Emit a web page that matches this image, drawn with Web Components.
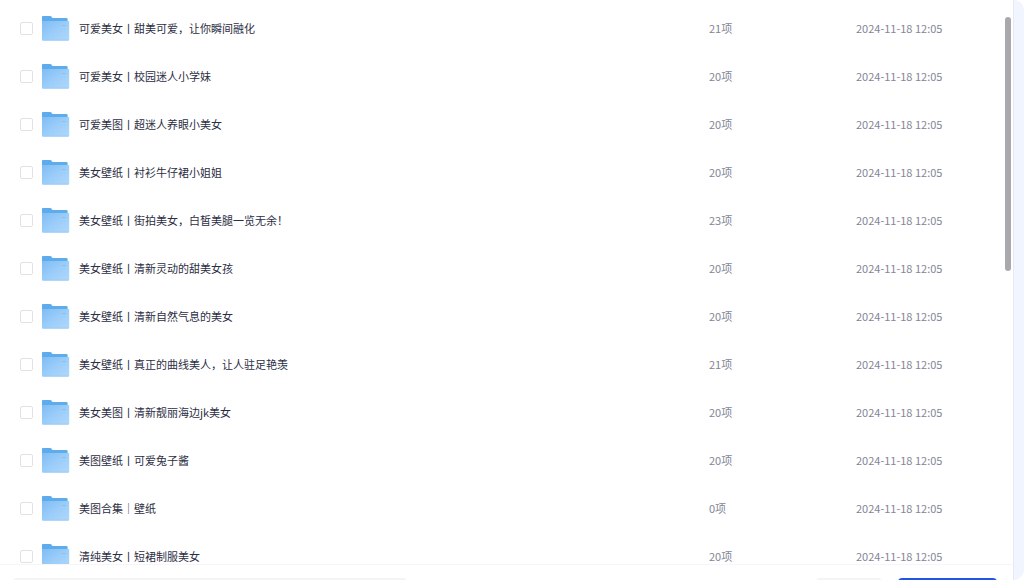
<!DOCTYPE html>
<html lang="zh-CN">
<head>
<meta charset="utf-8">
<title>文件列表</title>
<style>
  html, body { margin: 0; height: 100%; overflow: hidden; background: #fff; }
  body { font-family: "Noto Sans CJK SC", "Noto Sans", sans-serif; font-size: 11px; line-height: 16px; color: #2c2e44; }
</style>
</head>
<body>
<file-browser>
  <file-list></file-list>
  <action-bar slot="footer"></action-bar>
</file-browser>

<template id="file-browser">
  <style>
    :host { display: flex; height: 100vh; }
    main { flex: 1; min-width: 0; display: flex; flex-direction: column; background: #fff; border-right: 1px solid #e6e9f0; }
    .content { flex: 1; min-height: 0; display: flex; overflow: hidden; }
    aside { flex: 0 0 10px; background: #f0f5ff; border-radius: 0 10px 10px 0; }
    ::slotted(file-list) { flex: 1; min-width: 0; }
  </style>
  <main>
    <div class="content"><slot></slot><scroll-rail></scroll-rail></div>
    <slot name="footer"></slot>
  </main>
  <aside></aside>
</template>

<template id="scroll-rail">
  <style>
    :host { display: block; flex: 0 0 8px; box-sizing: border-box; padding: 17px 2px 0 0; }
    div { height: 254px; border-radius: 3px; background: #a8a9ac; }
  </style>
  <div></div>
</template>

<template id="folder-icon">
  <style>
    :host { display: block; width: 28px; height: 26px; }
    svg { display: block; }
  </style>
  <svg width="28" height="26" viewBox="0 0 28 26" aria-hidden="true">
    <defs>
      <linearGradient id="face" x1="0" y1="0" x2="1" y2="1">
        <stop offset="0" stop-color="#7ebcf4"/>
        <stop offset=".5" stop-color="#9bcdf9"/>
        <stop offset="1" stop-color="#afd8fc"/>
      </linearGradient>
    </defs>
    <path d="M0 1.8Q0 1 .8 1H8.4Q9 1 9.4 1.5L10.4 3H24.6Q25.6 3 25.6 4V20H0Z" fill="#5eaceb"/>
    <path d="M0 6H26.2Q27.2 6 27.2 7V24.6Q27.2 25.6 26.2 25.6H1Q0 25.6 0 24.6Z" fill="url(#face)"/>
    <path d="M.5 25.1H26.7" stroke="#98ccf9" fill="none"/>
    <path d="M20.4 10.5H23.6" stroke="#84bdf0" fill="none"/>
  </svg>
</template>

<template id="file-list">
  <style>
    :host { display: block; padding-top: 4px; }
    table { width: 100%; table-layout: fixed; border-collapse: collapse; }
    .pick { width: 42px; } .icon { width: 37px; } .count { width: 147px; } .date { width: 149px; }
    tr { height: 48px; }
    td { padding: 0; vertical-align: middle; white-space: nowrap; color: #818596; }
    td.name { color: inherit; }
    td.check { padding-left: 20px; }
    input { appearance: none; display: block; box-sizing: border-box; width: 13px; height: 13px; margin: 0; border: 1px solid #e2e2e2; border-radius: 2px; background: #fff; }
    input:checked { background: #2254e8; border-color: #2254e8; }
  </style>
  <table aria-label="文件列表">
    <colgroup><col class="pick"><col class="icon"><col><col class="count"><col class="date"></colgroup>
    <tbody></tbody>
  </table>
</template>

<template id="action-bar">
  <style>
    :host { display: flex; flex: 0 0 16px; box-sizing: border-box; overflow: hidden; align-items: flex-start; gap: 16px; padding: 13px 16px 0 13px; border-top: 1px solid #f6f6f8; }
    input, button { box-sizing: border-box; height: 32px; margin: 0; border: 0; padding: 0 12px; border-radius: 4px; font: inherit; background: #f4f4f5; }
    input { flex: 0 0 394px; margin-right: auto; }
    button { width: 66px; }
    .primary { width: 99px; background: #2254e8; color: #fff; }
  </style>
  <input type="text" aria-label="名称">
  <button type="button" aria-label="取消"></button>
  <button type="button" class="primary" aria-label="确定"></button>
</template>

<script>
  class TemplateElement extends HTMLElement {
    constructor() {
      super();
      this.attachShadow({ mode: "open" })
        .append(document.getElementById(this.localName).content.cloneNode(true));
    }
  }

  const files = [
    ["可爱美女丨甜美可爱，让你瞬间融化", 21],
    ["可爱美女丨校园迷人小学妹", 20],
    ["可爱美图丨超迷人养眼小美女", 20],
    ["美女壁纸丨衬衫牛仔裙小姐姐", 20],
    ["美女壁纸丨街拍美女，白皙美腿一览无余！", 23],
    ["美女壁纸丨清新灵动的甜美女孩", 20],
    ["美女壁纸丨清新自然气息的美女", 20],
    ["美女壁纸丨真正的曲线美人，让人驻足艳羡", 21],
    ["美女美图丨清新靓丽海边jk美女", 20],
    ["美图壁纸丨可爱兔子酱", 20],
    ["美图合集｜壁纸", 0],
    ["清纯美女丨短裙制服美女", 20]
  ];

  class FolderIcon extends TemplateElement {}
  class ScrollRail extends TemplateElement {}
  class ActionBar extends TemplateElement {}
  class FileBrowser extends TemplateElement {}
  class FileList extends TemplateElement {
    connectedCallback() {
      this.shadowRoot.querySelector("tbody").innerHTML = files.map(([name, count], i) => `
        <tr>
          <td class="check"><input type="checkbox" id="file-${i}"></td>
          <td><folder-icon></folder-icon></td>
          <td class="name"><label for="file-${i}">${name}</label></td>
          <td>${count}项</td>
          <td>2024-11-18 12:05</td>
        </tr>`).join("");
    }
  }

  customElements.define("folder-icon", FolderIcon);
  customElements.define("scroll-rail", ScrollRail);
  customElements.define("file-list", FileList);
  customElements.define("action-bar", ActionBar);
  customElements.define("file-browser", FileBrowser);
</script>
</body>
</html>
